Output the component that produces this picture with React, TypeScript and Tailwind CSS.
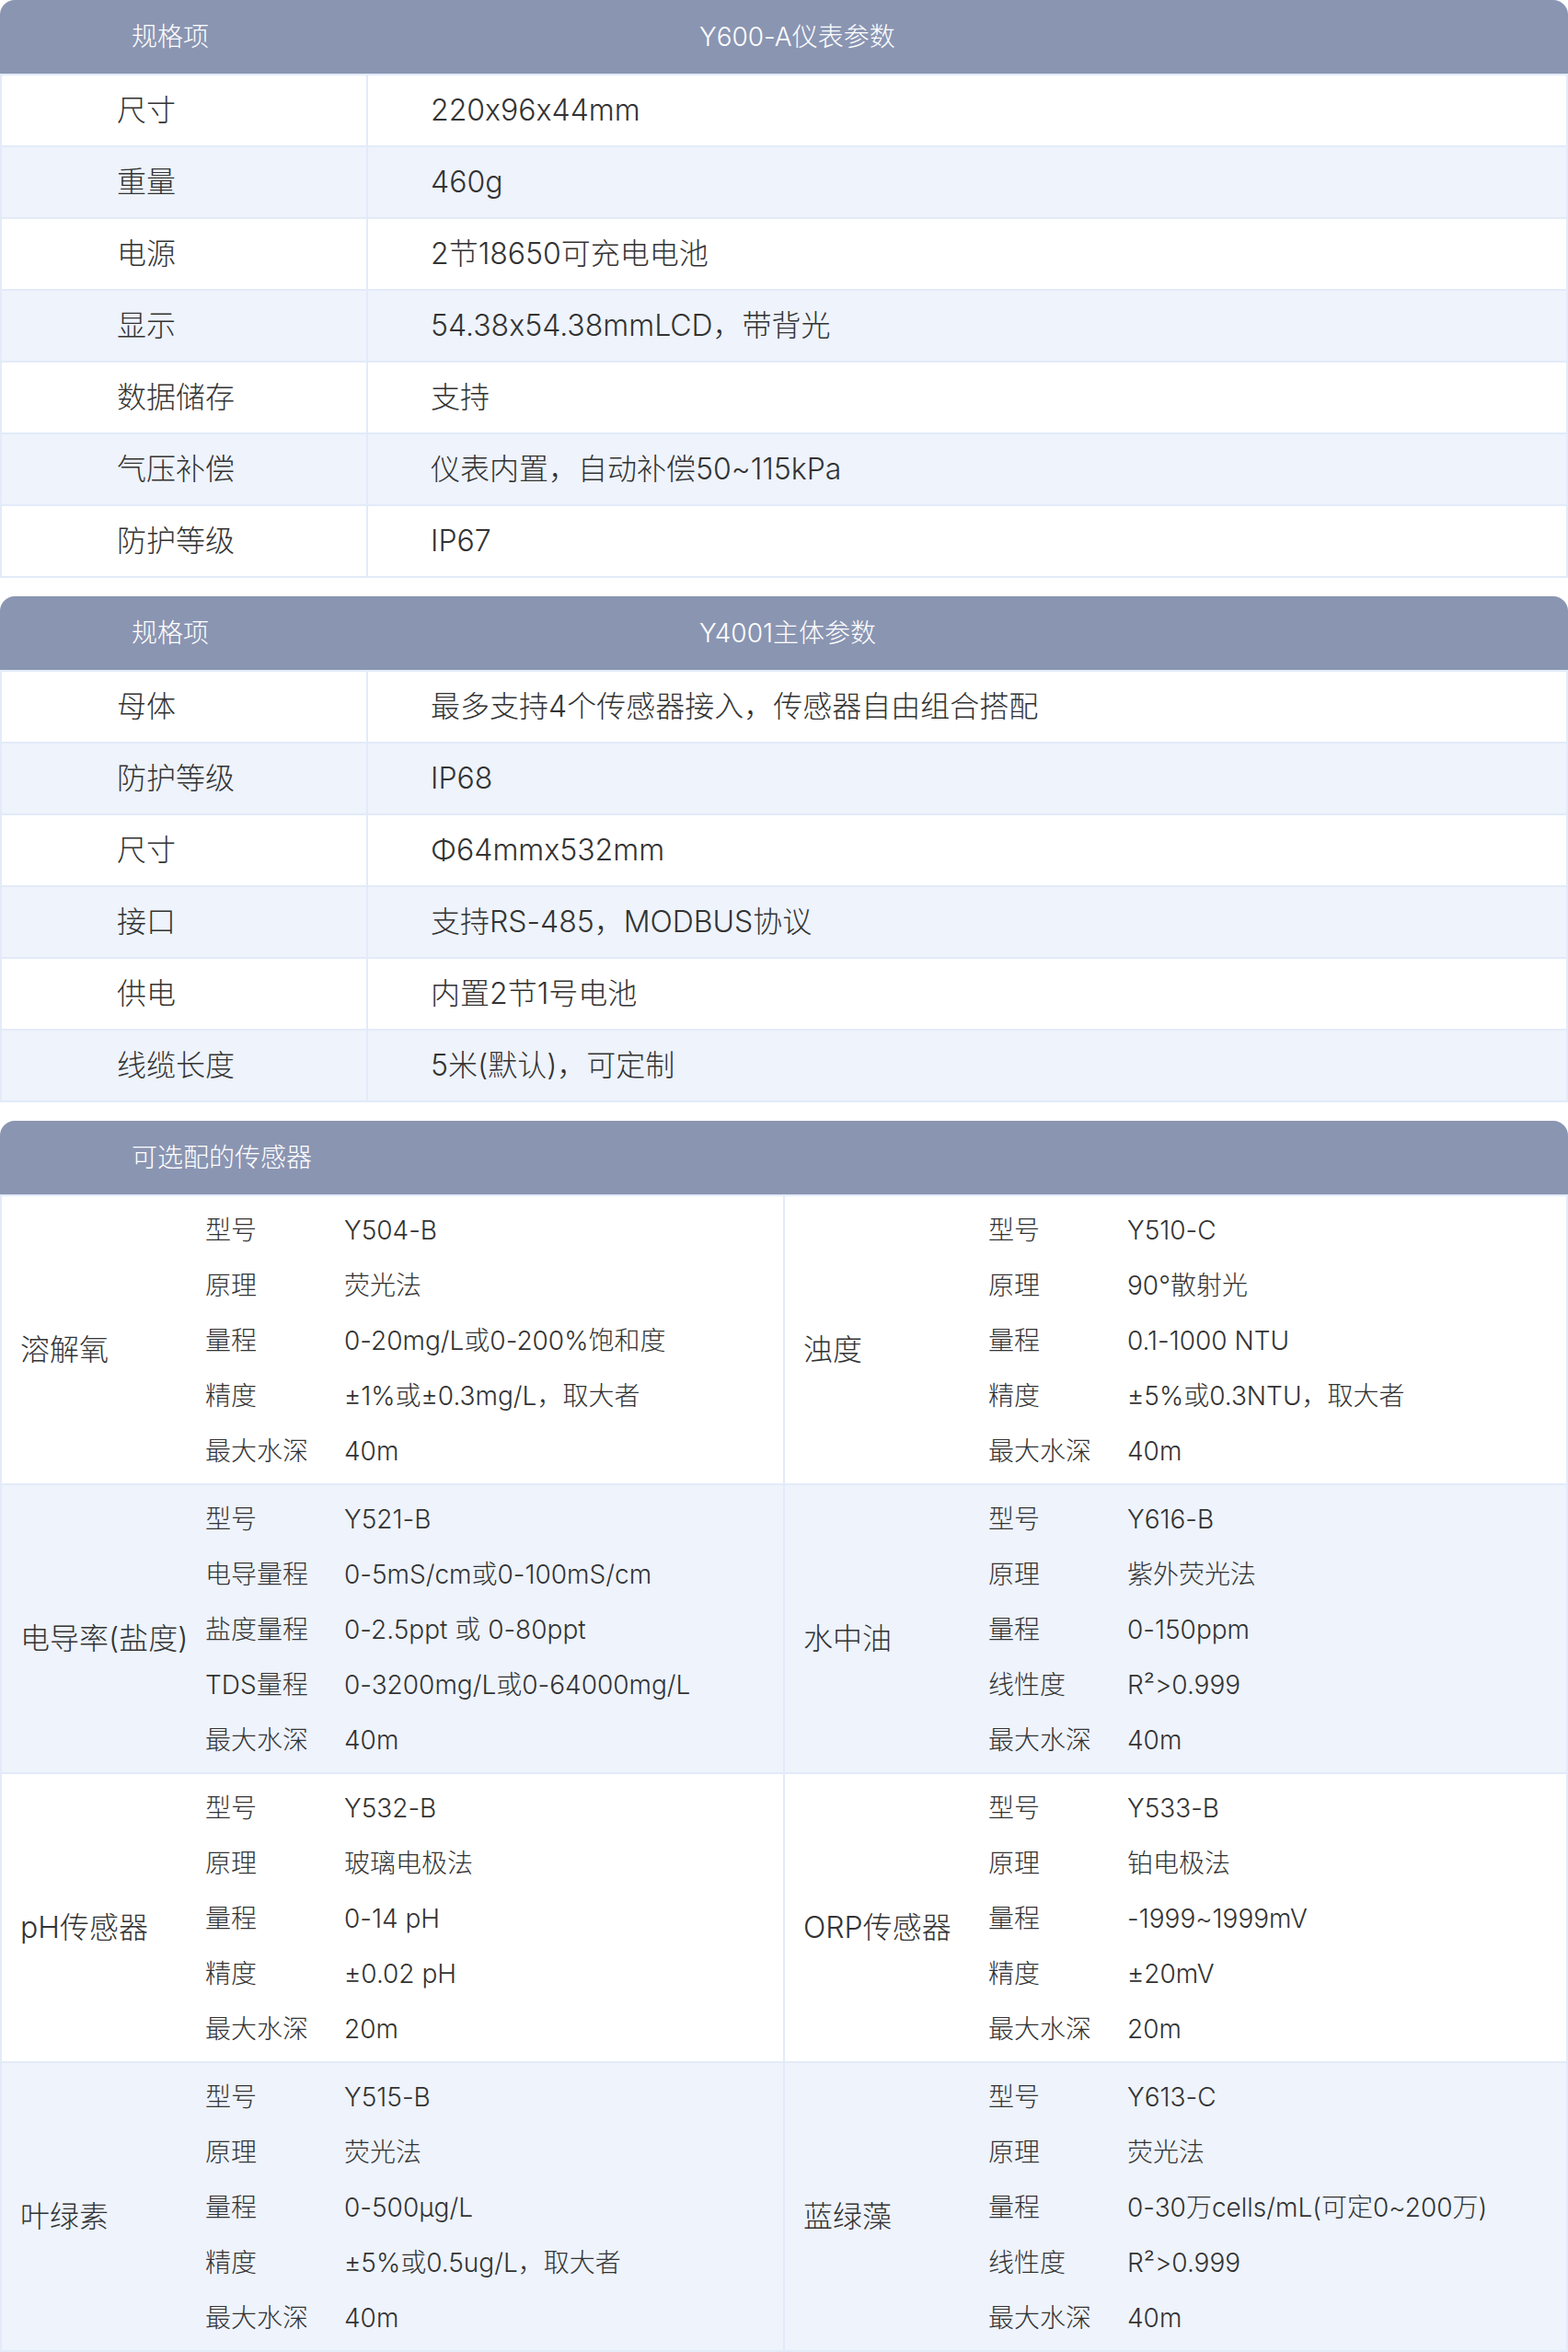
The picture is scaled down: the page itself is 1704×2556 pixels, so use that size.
import React from "react";

type Row = [string, string];

const t1: Row[] = [
  ["尺寸", "220x96x44mm"],
  ["重量", "460g"],
  ["电源", "2节18650可充电电池"],
  ["显示", "54.38x54.38mmLCD，带背光"],
  ["数据储存", "支持"],
  ["气压补偿", "仪表内置，自动补偿50~115kPa"],
  ["防护等级", "IP67"],
];

const t2: Row[] = [
  ["母体", "最多支持4个传感器接入，传感器自由组合搭配"],
  ["防护等级", "IP68"],
  ["尺寸", "Φ64mmx532mm"],
  ["接口", "支持RS-485，MODBUS协议"],
  ["供电", "内置2节1号电池"],
  ["线缆长度", "5米(默认)，可定制"],
];

type Sensor = { name: string; items: Row[] };

const sensors: [Sensor, Sensor][] = [
  [
    {
      name: "溶解氧",
      items: [
        ["型号", "Y504-B"],
        ["原理", "荧光法"],
        ["量程", "0-20mg/L或0-200%饱和度"],
        ["精度", "±1%或±0.3mg/L，取大者"],
        ["最大水深", "40m"],
      ],
    },
    {
      name: "浊度",
      items: [
        ["型号", "Y510-C"],
        ["原理", "90°散射光"],
        ["量程", "0.1-1000 NTU"],
        ["精度", "±5%或0.3NTU，取大者"],
        ["最大水深", "40m"],
      ],
    },
  ],
  [
    {
      name: "电导率(盐度)",
      items: [
        ["型号", "Y521-B"],
        ["电导量程", "0-5mS/cm或0-100mS/cm"],
        ["盐度量程", "0-2.5ppt 或 0-80ppt"],
        ["TDS量程", "0-3200mg/L或0-64000mg/L"],
        ["最大水深", "40m"],
      ],
    },
    {
      name: "水中油",
      items: [
        ["型号", "Y616-B"],
        ["原理", "紫外荧光法"],
        ["量程", "0-150ppm"],
        ["线性度", "R²>0.999"],
        ["最大水深", "40m"],
      ],
    },
  ],
  [
    {
      name: "pH传感器",
      items: [
        ["型号", "Y532-B"],
        ["原理", "玻璃电极法"],
        ["量程", "0-14 pH"],
        ["精度", "±0.02 pH"],
        ["最大水深", "20m"],
      ],
    },
    {
      name: "ORP传感器",
      items: [
        ["型号", "Y533-B"],
        ["原理", "铂电极法"],
        ["量程", "-1999~1999mV"],
        ["精度", "±20mV"],
        ["最大水深", "20m"],
      ],
    },
  ],
  [
    {
      name: "叶绿素",
      items: [
        ["型号", "Y515-B"],
        ["原理", "荧光法"],
        ["量程", "0-500µg/L"],
        ["精度", "±5%或0.5ug/L，取大者"],
        ["最大水深", "40m"],
      ],
    },
    {
      name: "蓝绿藻",
      items: [
        ["型号", "Y613-C"],
        ["原理", "荧光法"],
        ["量程", "0-30万cells/mL(可定0~200万)"],
        ["线性度", "R²>0.999"],
        ["最大水深", "40m"],
      ],
    },
  ],
];

function Header({ left, right }: { left: string; right?: string }) {
  return (
    <div className="flex h-[80px] items-center rounded-t-[16px] bg-[#8a95b2] text-[28px] font-light text-white">
      <div className="w-[400px] pl-[143px]">{left}</div>
      {right && <div className="pl-[360px]">{right}</div>}
    </div>
  );
}

function SpecTable({ title, rows }: { title: string; rows: Row[] }) {
  return (
    <div>
      <Header left="规格项" right={title} />
      <div className="border-x-2 border-b-2 border-[#e3ebf9]">
        {rows.map(([k, v], i) => (
          <div
            key={k + i}
            className={`flex h-[78px] border-t-2 border-[#e3ebf9] ${i % 2 === 1 ? "bg-[#eef3fc]" : "bg-white"}`}
          >
            <div className="flex w-[398px] items-center border-r-2 border-[#e3ebf9] pl-[125px]">{k}</div>
            <div className="flex items-center pl-[68px]">{v}</div>
          </div>
        ))}
      </div>
    </div>
  );
}

function SensorCell({ s, divider }: { s: Sensor; divider: boolean }) {
  return (
    <div className={`flex flex-1 pt-[7px] pb-[5px] ${divider ? "border-r-2 border-[#e3ebf9]" : ""}`}>
      <div className="flex w-[221px] items-center pl-[20px] pt-[20px] text-[32px]">{s.name}</div>
      <div className="flex flex-col text-[28px]">
        {s.items.map(([k, v]) => (
          <div key={k} className="flex h-[60px] items-center">
            <div className="w-[151px]">{k}</div>
            <div>{v}</div>
          </div>
        ))}
      </div>
    </div>
  );
}

export default function App() {
  return (
    <div className="w-[1704px] bg-white font-['Inter','Noto_Sans_CJK_SC','Noto_Sans',sans-serif] text-[32px] font-light leading-none text-[#333] [font-feature-settings:'calt'_0]">
      <SpecTable title="Y600-A仪表参数" rows={t1} />
      <div className="h-[20px]" />
      <SpecTable title="Y4001主体参数" rows={t2} />
      <div className="h-[20px]" />
      <div>
        <Header left="可选配的传感器" />
        <div className="border-x-2 border-b-2 border-[#e3ebf9]">
          {sensors.map((pair, i) => (
            <div
              key={i}
              className={`flex h-[314px] border-t-2 border-[#e3ebf9] ${i % 2 === 1 ? "bg-[#eef3fc]" : "bg-white"}`}
            >
              <SensorCell s={pair[0]} divider />
              <SensorCell s={pair[1]} divider={false} />
            </div>
          ))}
        </div>
      </div>
    </div>
  );
}
